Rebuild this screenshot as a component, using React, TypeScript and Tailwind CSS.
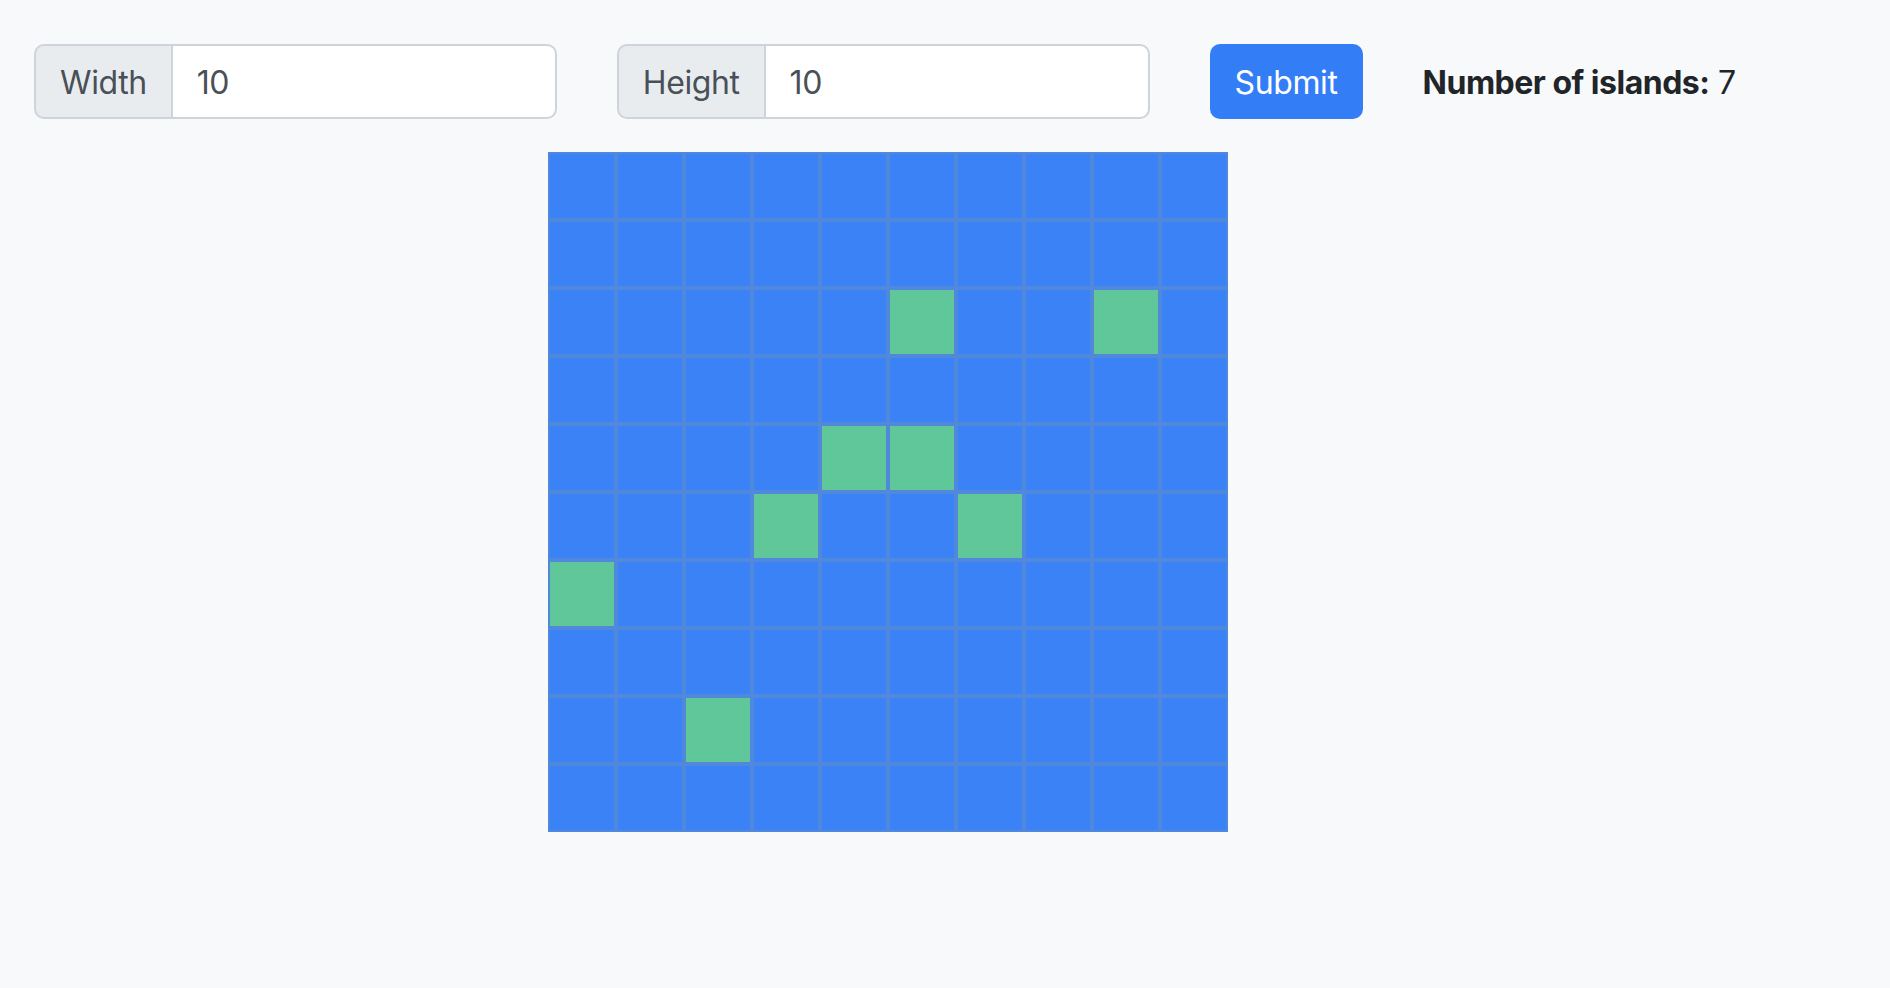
import { useState } from 'react'

const LAND = new Set(['2-5', '2-8', '4-4', '4-5', '5-3', '5-6', '6-0', '8-2'])

function InputGroup({ label, value, onChange }: { label: string; value: string; onChange: (v: string) => void }) {
  return (
    <div className="flex h-[75px]">
      <span className="flex items-center pt-[3px] px-[24px] bg-[#e9ecef] text-[#495057] border-2 border-[#ced4da] rounded-l-[10px] text-[32px] tracking-[-0.4px] leading-none">
        {label}
      </span>
      <input
        value={value}
        onChange={e => onChange(e.target.value)}
        className="w-[384px] pt-[3px] px-[24px] bg-white text-[#495057] border-2 border-l-0 border-[#ced4da] rounded-r-[10px] text-[32px] tracking-[-0.4px] outline-none"
      />
    </div>
  )
}

export default function App() {
  const [width, setWidth] = useState('10')
  const [height, setHeight] = useState('10')
  const rows = Array.from({ length: 10 }, (_, r) => r)
  const cols = Array.from({ length: 10 }, (_, c) => c)

  return (
    <div className="min-h-screen bg-[#f8f9fa] font-['Inter',sans-serif] pt-[44px] pl-[34px]">
      <div className="flex items-center gap-[60px]">
        <InputGroup label="Width" value={width} onChange={setWidth} />
        <InputGroup label="Height" value={height} onChange={setHeight} />
        <button className="h-[75px] w-[153px] pt-[3px] rounded-[10px] bg-[#337ef6] text-white text-[32px] tracking-[-0.4px]">Submit</button>
        <div className="pt-[3px] text-[32px] tracking-[-0.5px] text-[#212529]">
          <span className="font-bold">Number of islands:</span> 7
        </div>
      </div>
      <div className="mt-[33px] ml-[514px] w-[680px] grid grid-cols-10">
        {rows.map(r =>
          cols.map(c => (
            <div
              key={`${r}-${c}`}
              className={`h-[68px] border-2 border-[#5089dc] ${LAND.has(`${r}-${c}`) ? 'bg-[#60c79b]' : 'bg-[#3b82f6]'}`}
            />
          ))
        )}
      </div>
    </div>
  )
}
